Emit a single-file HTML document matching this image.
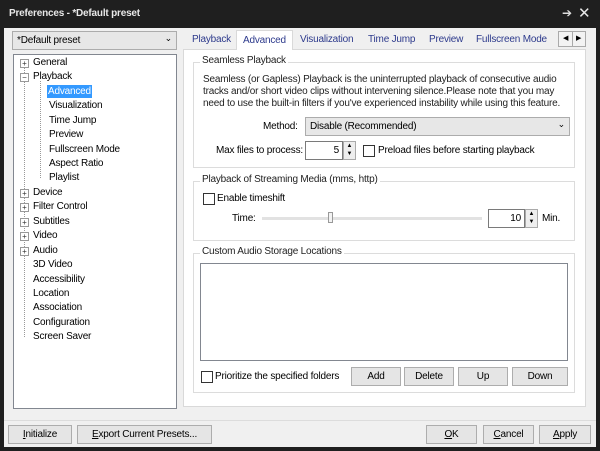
<!DOCTYPE html>
<html><head><meta charset="utf-8"><style>
*{box-sizing:border-box;margin:0;padding:0}
body{width:600px;height:451px;background:#1f1f1f;font-family:"Liberation Sans",sans-serif;font-size:10px;letter-spacing:-0.2px;color:#000;position:relative;overflow:hidden}
.a{position:absolute;white-space:nowrap}
.client{position:absolute;left:4px;top:28px;width:592px;height:419px;background:#f0f0f0}
.btn{position:absolute;height:19px;border:1px solid #adadad;background:#e5e5e5;text-align:center;line-height:17px}
.grp{position:absolute;border:1px solid #dcdcdc}
.gl{position:absolute;top:-8px;left:6px;background:#fff;padding:0 2px;color:#222}
.cb{position:absolute;width:12px;height:12px;border:1px solid #333;background:#fff}
.pm{position:absolute;width:9px;height:9px;border:1px solid #999;background:#fff;font-size:8px;line-height:7px;text-align:center;color:#333;letter-spacing:0}
.tab{position:absolute;top:34px;color:#2d3a8c}
</style></head><body>
<div class="a" style="left:9px;top:8px;color:#e8e8e8;font-size:10px;font-weight:bold">Preferences - *Default preset</div>
<div class="a" style="left:562px;top:6px;color:#ddd;font-size:12px">&#x2794;</div>
<div class="a" style="left:578px;top:4px;color:#e8e8e8;font-size:15px">✕</div>
<div class="client"></div>
<div class="a" style="left:12px;top:31px;width:165px;height:19px;border:1px solid #acacac;background:#e7e7e7;padding:3px 4px">*Default preset<span style="position:absolute;right:4px;top:1px;font-size:9px">&#8964;</span></div>
<div class="a" style="left:13px;top:54px;width:164px;height:355px;border:1px solid #828790;background:#fff"></div>
<div class="a" style="left:24px;top:67px;height:270px;border-left:1px dotted #999"></div>
<div class="a" style="left:40px;top:81px;height:97px;border-left:1px dotted #999"></div>
<div class="pm" style="left:20px;top:59px">+</div><div class="a" style="left:33px;top:57px">General</div>
<div class="pm" style="left:20px;top:73px">−</div><div class="a" style="left:33px;top:71px">Playback</div>
<div class="a" style="left:47px;top:85px;background:#3399ff;color:#fff;padding:1px 1px">Advanced</div>
<div class="a" style="left:49px;top:100px">Visualization</div>
<div class="a" style="left:49px;top:115px">Time Jump</div>
<div class="a" style="left:49px;top:129px">Preview</div>
<div class="a" style="left:49px;top:144px">Fullscreen Mode</div>
<div class="a" style="left:49px;top:158px">Aspect Ratio</div>
<div class="a" style="left:49px;top:172px">Playlist</div>
<div class="pm" style="left:20px;top:189px">+</div><div class="a" style="left:33px;top:187px">Device</div>
<div class="pm" style="left:20px;top:203px">+</div><div class="a" style="left:33px;top:201px">Filter Control</div>
<div class="pm" style="left:20px;top:218px">+</div><div class="a" style="left:33px;top:216px">Subtitles</div>
<div class="pm" style="left:20px;top:232px">+</div><div class="a" style="left:33px;top:230px">Video</div>
<div class="pm" style="left:20px;top:247px">+</div><div class="a" style="left:33px;top:245px">Audio</div>
<div class="a" style="left:33px;top:259px">3D Video</div>
<div class="a" style="left:33px;top:274px">Accessibility</div>
<div class="a" style="left:33px;top:288px">Location</div>
<div class="a" style="left:33px;top:302px">Association</div>
<div class="a" style="left:33px;top:317px">Configuration</div>
<div class="a" style="left:33px;top:331px">Screen Saver</div>
<div class="a" style="left:183px;top:49px;width:403px;height:358px;border:1px solid #d9d9d9;background:#fff"></div>
<div class="tab" style="left:192px">Playback</div>
<div class="a" style="left:236px;top:30px;width:57px;height:20px;border:1px solid #d9d9d9;border-bottom:none;background:#fff;padding:4px 6px;color:#2d3a8c">Advanced</div>
<div class="tab" style="left:300px">Visualization</div>
<div class="tab" style="left:368px">Time Jump</div>
<div class="tab" style="left:429px">Preview</div>
<div class="tab" style="left:476px">Fullscreen Mode</div>
<div class="a" style="left:558px;top:31px;width:28px;height:16px;border:1px solid #aaa;background:#f3f3f3;font-size:7px;line-height:14px;letter-spacing:0"><span style="position:absolute;left:4px">◀</span><span style="position:absolute;left:13px;top:0;height:14px;border-left:1px solid #aaa"></span><span style="position:absolute;left:17px">▶</span></div>
<div class="grp" style="left:193px;top:62px;width:382px;height:106px"><div class="gl">Seamless Playback</div></div>
<div class="a" style="left:203px;top:74px;line-height:12px;color:#222">Seamless (or Gapless) Playback is the uninterrupted playback of consecutive audio<br>tracks and/or short video clips without intervening silence.Please note that you may<br>need to use the built-in filters if you've experienced instability while using this feature.</div>
<div class="a" style="left:263px;top:121px">Method:</div>
<div class="a" style="left:305px;top:117px;width:265px;height:19px;border:1px solid #acacac;background:#e7e7e7;padding:3px 4px">Disable (Recommended)<span style="position:absolute;right:4px;top:1px;font-size:9px">&#8964;</span></div>
<div class="a" style="left:216px;top:145px">Max files to process:</div>
<div class="a" style="left:305px;top:141px;width:38px;height:19px;border:1px solid #7a7a7a;background:#fff;text-align:right;padding:3px 3px">5</div>
<div class="a" style="left:343px;top:141px;width:13px;height:19px;border:1px solid #aaa;background:#eee;font-size:6px;text-align:center;line-height:8px;letter-spacing:0">▲<br>▼</div>
<div class="cb" style="left:363px;top:145px"></div><div class="a" style="left:378px;top:145px">Preload files before starting playback</div>
<div class="grp" style="left:193px;top:181px;width:382px;height:60px"><div class="gl">Playback of Streaming Media (mms, http)</div></div>
<div class="cb" style="left:203px;top:193px"></div><div class="a" style="left:217px;top:193px">Enable timeshift</div>
<div class="a" style="left:232px;top:213px">Time:</div>
<div class="a" style="left:262px;top:217px;width:220px;height:3px;background:#e2e2e2"></div>
<div class="a" style="left:328px;top:212px;width:5px;height:11px;border:1px solid #999;background:#f3f3f3"></div>
<div class="a" style="left:488px;top:209px;width:37px;height:19px;border:1px solid #7a7a7a;background:#fff;text-align:right;padding:3px 3px">10</div>
<div class="a" style="left:525px;top:209px;width:13px;height:19px;border:1px solid #aaa;background:#eee;font-size:6px;text-align:center;line-height:8px;letter-spacing:0">▲<br>▼</div>
<div class="a" style="left:542px;top:213px">Min.</div>
<div class="grp" style="left:193px;top:253px;width:382px;height:140px"><div class="gl">Custom Audio Storage Locations</div></div>
<div class="a" style="left:200px;top:263px;width:368px;height:98px;border:1px solid #828790;background:#fff"></div>
<div class="cb" style="left:201px;top:371px"></div><div class="a" style="left:215px;top:371px">Prioritize the specified folders</div>
<div class="btn" style="left:351px;top:367px;width:50px">Add</div>
<div class="btn" style="left:404px;top:367px;width:50px">Delete</div>
<div class="btn" style="left:458px;top:367px;width:50px">Up</div>
<div class="btn" style="left:512px;top:367px;width:56px">Down</div>
<div class="a" style="left:4px;top:420px;width:592px;height:1px;background:#dcdcdc"></div>
<div class="btn" style="left:8px;top:425px;width:64px"><u>I</u>nitialize</div>
<div class="btn" style="left:77px;top:425px;width:135px"><u>E</u>xport Current Presets...</div>
<div class="btn" style="left:426px;top:425px;width:51px"><u>O</u>K</div>
<div class="btn" style="left:483px;top:425px;width:51px"><u>C</u>ancel</div>
<div class="btn" style="left:539px;top:425px;width:52px"><u>A</u>pply</div>
</body></html>
